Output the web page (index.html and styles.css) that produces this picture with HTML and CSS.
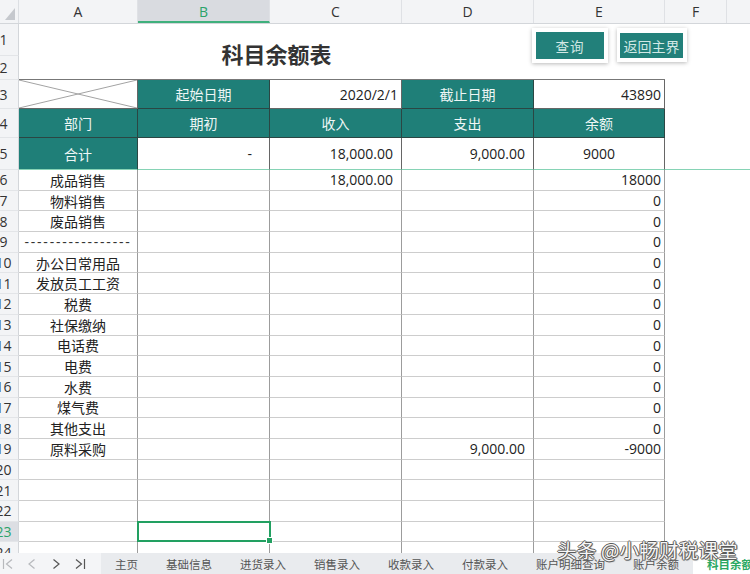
FILE: index.html
```html
<!DOCTYPE html>
<html lang="zh-CN">
<head>
<meta charset="utf-8">
<title>科目余额表</title>
<link rel="stylesheet" href="styles.css">
</head>
<body>
<div class="sheet">
  <div class="r hdr">
    <div class="corner"><span class="tri"></span></div>
    <div class="ch">A</div><div class="ch on">B</div><div class="ch">C</div><div class="ch">D</div><div class="ch">E</div><div class="ch">F</div><div class="ch last"></div>
  </div>
  <div class="r top">
    <div class="c rn r1">1</div>
    <div class="c rn r2">2</div>
    <div class="c title">科目余额表</div>
    <div class="c etop"></div>
    <div class="c rest"></div>
  </div>
  <div class="r h29">
    <div class="c rn">3</div>
    <div class="c w diag"><svg class="x" viewBox="0 0 100 100" preserveAspectRatio="none"><line x1="0" y1="0" x2="100" y2="100"/><line x1="0" y1="100" x2="100" y2="0"/></svg></div>
    <div class="c t">起始日期</div>
    <div class="c w num">2020/2/1</div>
    <div class="c t">截止日期</div>
    <div class="c w num">43890</div>
    <div class="c"></div><div class="c"></div>
  </div>
  <div class="r h29">
    <div class="c rn">4</div>
    <div class="c t">部门</div><div class="c t">期初</div><div class="c t">收入</div><div class="c t">支出</div><div class="c t">余额</div>
    <div class="c"></div><div class="c"></div>
  </div>
  <div class="r h32 frz">
    <div class="c rn">5</div>
    <div class="c t">合计</div>
    <div class="c w num dash">-</div>
    <div class="c w num acc">18,000.00</div>
    <div class="c w num acc">9,000.00</div>
    <div class="c w">9000</div>
    <div class="c"></div><div class="c"></div>
  </div>
  <div class="r d"><div class="c rn">6</div><div class="c g">成品销售</div><div class="c g"></div><div class="c g num acc">18,000.00</div><div class="c g"></div><div class="c g num">18000</div><div class="c"></div><div class="c"></div></div>
  <div class="r d"><div class="c rn">7</div><div class="c g">物料销售</div><div class="c g"></div><div class="c g"></div><div class="c g"></div><div class="c g num">0</div><div class="c"></div><div class="c"></div></div>
  <div class="r d"><div class="c rn">8</div><div class="c g">废品销售</div><div class="c g"></div><div class="c g"></div><div class="c g"></div><div class="c g num">0</div><div class="c"></div><div class="c"></div></div>
  <div class="r d"><div class="c rn">9</div><div class="c g hy">-----------------</div><div class="c g"></div><div class="c g"></div><div class="c g"></div><div class="c g num">0</div><div class="c"></div><div class="c"></div></div>
  <div class="r d"><div class="c rn">10</div><div class="c g">办公日常用品</div><div class="c g"></div><div class="c g"></div><div class="c g"></div><div class="c g num">0</div><div class="c"></div><div class="c"></div></div>
  <div class="r d"><div class="c rn">11</div><div class="c g">发放员工工资</div><div class="c g"></div><div class="c g"></div><div class="c g"></div><div class="c g num">0</div><div class="c"></div><div class="c"></div></div>
  <div class="r d"><div class="c rn">12</div><div class="c g">税费</div><div class="c g"></div><div class="c g"></div><div class="c g"></div><div class="c g num">0</div><div class="c"></div><div class="c"></div></div>
  <div class="r d"><div class="c rn">13</div><div class="c g">社保缴纳</div><div class="c g"></div><div class="c g"></div><div class="c g"></div><div class="c g num">0</div><div class="c"></div><div class="c"></div></div>
  <div class="r d"><div class="c rn">14</div><div class="c g">电话费</div><div class="c g"></div><div class="c g"></div><div class="c g"></div><div class="c g num">0</div><div class="c"></div><div class="c"></div></div>
  <div class="r d"><div class="c rn">15</div><div class="c g">电费</div><div class="c g"></div><div class="c g"></div><div class="c g"></div><div class="c g num">0</div><div class="c"></div><div class="c"></div></div>
  <div class="r d"><div class="c rn">16</div><div class="c g">水费</div><div class="c g"></div><div class="c g"></div><div class="c g"></div><div class="c g num">0</div><div class="c"></div><div class="c"></div></div>
  <div class="r d"><div class="c rn">17</div><div class="c g">煤气费</div><div class="c g"></div><div class="c g"></div><div class="c g"></div><div class="c g num">0</div><div class="c"></div><div class="c"></div></div>
  <div class="r d"><div class="c rn">18</div><div class="c g">其他支出</div><div class="c g"></div><div class="c g"></div><div class="c g"></div><div class="c g num">0</div><div class="c"></div><div class="c"></div></div>
  <div class="r d"><div class="c rn">19</div><div class="c g">原料采购</div><div class="c g"></div><div class="c g"></div><div class="c g num acc">9,000.00</div><div class="c g num">-9000</div><div class="c"></div><div class="c"></div></div>
  <div class="r d"><div class="c rn">20</div><div class="c g"></div><div class="c g"></div><div class="c g"></div><div class="c g"></div><div class="c g"></div><div class="c"></div><div class="c"></div></div>
  <div class="r d"><div class="c rn">21</div><div class="c g"></div><div class="c g"></div><div class="c g"></div><div class="c g"></div><div class="c g"></div><div class="c"></div><div class="c"></div></div>
  <div class="r d"><div class="c rn">22</div><div class="c g"></div><div class="c g"></div><div class="c g"></div><div class="c g"></div><div class="c g"></div><div class="c"></div><div class="c"></div></div>
  <div class="r d"><div class="c rn on">23</div><div class="c g"></div><div class="c g pick"></div><div class="c g"></div><div class="c g"></div><div class="c g"></div><div class="c"></div><div class="c"></div></div>
  <div class="r d"><div class="c rn">24</div><div class="c g"></div><div class="c g"></div><div class="c g"></div><div class="c g"></div><div class="c g"></div><div class="c"></div><div class="c"></div></div>

  <div class="btn b1"><span>查询</span></div>
  <div class="btn b2"><span>返回主界</span></div>
</div>
<div class="tabs">
  <div class="nav">
    <svg class="ico dim" viewBox="0 0 12 12"><path d="M1.5 1v10M10 1.5L4.5 6l5.5 4.5"/></svg>
    <svg class="ico dim" viewBox="0 0 12 12"><path d="M8.5 1.5L3 6l5.5 4.5"/></svg>
    <svg class="ico" viewBox="0 0 12 12"><path d="M3.5 1.5L9 6l-5.5 4.5"/></svg>
    <svg class="ico" viewBox="0 0 12 12"><path d="M2 1.5L7.5 6 2 10.5M10.5 1v10"/></svg>
  </div>
  <div class="tab">主页</div>
  <div class="tab">基础信息</div>
  <div class="tab">进货录入</div>
  <div class="tab">销售录入</div>
  <div class="tab">收款录入</div>
  <div class="tab">付款录入</div>
  <div class="tab">账户明细查询</div>
  <div class="tab">账户余额</div>
  <div class="tab act">科目余额表</div>
</div>
<div class="wm">头条 @小畅财税课堂</div>
</body>
</html>
```

FILE: styles.css
```css
* { box-sizing: border-box; margin: 0; padding: 0; }
body {
  width: 750px; height: 574px; overflow: hidden; position: relative;
  background: #fff; color: #222;
  font-family: "Open Sans", "Noto Sans CJK SC", sans-serif; font-size: 14px;
}
.sheet { height: 553px; overflow: hidden; position: relative; }
.r {
  display: grid;
  grid-template-columns: 19px 119px 132px 132px 132px 131px 62px 1fr;
}
.c {
  display: flex; align-items: center; justify-content: center;
  white-space: nowrap; overflow: hidden; min-width: 0;
}
.hdr { height: 24px; background: #f3f4f6; border-bottom: 1px solid #d3d6da; }
.corner { position: relative; border-right: 1px solid #dcdfe3; }
.tri {
  position: absolute; left: 5px; top: 8px; width: 10px; height: 12px;
  background: #c5c8cd; clip-path: polygon(100% 0, 100% 100%, 0 100%);
}
.ch {
  display: flex; align-items: center; justify-content: center;
  color: #333; font-size: 14px; border-right: 1px solid #dfe1e5;
}
.ch.on { background: #d9dbe0; color: #2ca36a; border-bottom: 2px solid #3fb07c; padding-top: 1px; }
.ch.last { border-right: none; }

.rn {
  background: #f3f4f6; color: #333; font-size: 14px;
  border-right: 1px solid #d3d6da; border-bottom: 1px solid #e3e5e8;
  padding-right: 11px;
}
.rn.on { background: #dcdee3; color: #2ca36a; }

.top { grid-template-rows: 32px 24px; }
.r1 { grid-column: 1; grid-row: 1; }
.r2 { grid-column: 1; grid-row: 2; }
.title {
  grid-column: 2 / 6; grid-row: 1 / 3;
  font-size: 22px; font-weight: bold; color: #333;
  font-family: "Noto Sans CJK SC", sans-serif;
  border-bottom: 1px solid #777; padding-top: 2px;
}
.etop { grid-column: 6; grid-row: 1 / 3; border-bottom: 1px solid #777; }
.rest { grid-column: 7 / 9; grid-row: 1 / 3; }

.h29 { height: 29px; }
.h32 { height: 32px; }
.d { height: 20.7px; }

.t {
  background: #1f7f78; color: #eef6f5;
  border-right: 1px solid #2b4643; border-bottom: 1px solid #2b4643;
}
.w { border-right: 1px solid #666; border-bottom: 1px solid #666; }
.frz > .c:not(.rn) { border-bottom: 1px solid #86d3b5; }
.num { justify-content: flex-end; padding-right: 3px; }
.num.acc { padding-right: 8px; }
.dash { padding-right: 17px; }
.diag { position: relative; }
.x { position: absolute; left: 0; top: 0; width: 100%; height: 100%; }
.x line { stroke: #a3a3a3; stroke-width: 1; vector-effect: non-scaling-stroke; }

.g { border-right: 1px solid #9c9c9c; border-bottom: 1px solid #cdcdcd; }
.hy { letter-spacing: 1.8px; color: #333; }
.pick { position: relative; overflow: visible; }
.pick::after {
  content: ""; position: absolute; left: -1px; top: -1px; right: -2px; bottom: -1px;
  border: 2px solid #22a061;
}
.pick::before {
  content: ""; position: absolute; right: -4px; bottom: -3px; width: 5px; height: 5px;
  background: #22a061; border: 1px solid #fff; z-index: 2;
}

.btn {
  position: absolute; background: #fff;
  box-shadow: 0 1px 4px rgba(0,0,0,0.28);
  display: flex;
}
.btn span {
  flex: 1; background: #22807a; color: #d2e8e5;
  display: flex; align-items: center; justify-content: center;
  font-family: "Noto Sans CJK SC", sans-serif;
}
.b1 { left: 532px; top: 28px; width: 76px; height: 35px; padding: 4px; }
.b1 span { font-size: 13.5px; letter-spacing: 1px; }
.b2 { left: 617px; top: 28px; width: 70px; height: 34px; padding: 5px 4px 4px 3px; }
.b2 span { font-size: 14px; }

.tabs {
  height: 21px; display: flex; background: #e9ebee;
  font-family: "Noto Sans CJK SC", sans-serif; font-size: 11.5px; color: #555;
  overflow: hidden; white-space: nowrap;
}
.nav {
  width: 101px; flex: none; background: #f4f5f7;
  display: flex; align-items: center; gap: 12px; padding-left: 2px;
}
.ico { width: 12px; height: 12px; fill: none; stroke: #555; stroke-width: 1.2; }
.ico.dim { stroke: #b7b9bd; }
.tab { flex: none; padding: 0 14px; display: flex; align-items: center; }
.tab.act { background: #fff; color: #2aa862; font-weight: bold; }

.wm {
  position: absolute; left: 557px; top: 535px;
  font-family: "Noto Sans CJK SC", sans-serif; font-size: 19.5px;
  color: #f6f6f6; letter-spacing: 0.2px;
  text-shadow: 1px 0 0 #5a5a5a, -1px 0 0 #5a5a5a, 0 1px 0 #5a5a5a, 0 -1px 0 #5a5a5a, 1px 1px 1px #777;
}
```
